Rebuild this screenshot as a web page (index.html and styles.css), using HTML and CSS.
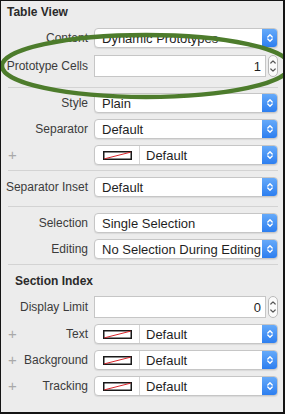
FILE: index.html
```html
<!DOCTYPE html>
<html lang="en">
<head>
  <meta charset="UTF-8">
  <meta name="viewport" content="width=device-width, initial-scale=1.0">
  <link rel="stylesheet" href="styles.css">
</head>
<body>
  <div class="inspector">

    <h3 class="section-title">Table View</h3>

    <div class="row first">
      <span class="label">Content</span>
      <div class="popup">
        <span class="value">Dynamic Prototypes</span>
        <span class="arrows"><svg width="8" height="12" viewBox="0 0 8 12"><path d="M1.8 5 L4 2.8 L6.2 5 M1.8 7 L4 9.2 L6.2 7" /></svg></span>
      </div>
    </div>

    <div class="row field-row">
      <span class="label">Prototype Cells</span>
      <div class="number-field">
        <input class="number" type="text" value="1">
        <span class="stepper"><svg width="8" height="18" viewBox="0 0 8 18"><path d="M1.8 6 L4 3.8 L6.2 6 M1.8 12 L4 14.2 L6.2 12" /></svg></span>
      </div>
    </div>

    <hr class="divider d1">

    <div class="row">
      <span class="label">Style</span>
      <div class="popup">
        <span class="value">Plain</span>
        <span class="arrows"><svg width="8" height="12" viewBox="0 0 8 12"><path d="M1.8 5 L4 2.8 L6.2 5 M1.8 7 L4 9.2 L6.2 7" /></svg></span>
      </div>
    </div>

    <div class="row">
      <span class="label">Separator</span>
      <div class="popup">
        <span class="value">Default</span>
        <span class="arrows"><svg width="8" height="12" viewBox="0 0 8 12"><path d="M1.8 5 L4 2.8 L6.2 5 M1.8 7 L4 9.2 L6.2 7" /></svg></span>
      </div>
    </div>

    <div class="row">
      <span class="label"><span class="plus">+</span></span>
      <div class="popup">
        <span class="swatch"><svg width="29" height="9" viewBox="0 0 29 9"><rect x="0.75" y="0.75" width="27.5" height="7.5" fill="#fff" stroke="#1a1a1a" stroke-width="1.5" /><line x1="1.5" y1="7.8" x2="27.5" y2="1.2" stroke="#d9262c" stroke-width="1" /></svg></span>
        <span class="value">Default</span>
        <span class="arrows"><svg width="8" height="12" viewBox="0 0 8 12"><path d="M1.8 5 L4 2.8 L6.2 5 M1.8 7 L4 9.2 L6.2 7" /></svg></span>
      </div>
    </div>

    <hr class="divider d2">

    <div class="row">
      <span class="label">Separator Inset</span>
      <div class="popup">
        <span class="value">Default</span>
        <span class="arrows"><svg width="8" height="12" viewBox="0 0 8 12"><path d="M1.8 5 L4 2.8 L6.2 5 M1.8 7 L4 9.2 L6.2 7" /></svg></span>
      </div>
    </div>

    <hr class="divider d3">

    <div class="row">
      <span class="label">Selection</span>
      <div class="popup">
        <span class="value">Single Selection</span>
        <span class="arrows"><svg width="8" height="12" viewBox="0 0 8 12"><path d="M1.8 5 L4 2.8 L6.2 5 M1.8 7 L4 9.2 L6.2 7" /></svg></span>
      </div>
    </div>

    <div class="row">
      <span class="label">Editing</span>
      <div class="popup">
        <span class="value">No Selection During Editing</span>
        <span class="arrows"><svg width="8" height="12" viewBox="0 0 8 12"><path d="M1.8 5 L4 2.8 L6.2 5 M1.8 7 L4 9.2 L6.2 7" /></svg></span>
      </div>
    </div>

    <hr class="divider d4">

    <h3 class="section-title sub">Section Index</h3>

    <div class="row field-row">
      <span class="label">Display Limit</span>
      <div class="number-field">
        <input class="number" type="text" value="0">
        <span class="stepper"><svg width="8" height="18" viewBox="0 0 8 18"><path d="M1.8 6 L4 3.8 L6.2 6 M1.8 12 L4 14.2 L6.2 12" /></svg></span>
      </div>
    </div>

    <div class="row">
      <span class="label"><span class="plus">+</span>Text</span>
      <div class="popup">
        <span class="swatch"><svg width="29" height="9" viewBox="0 0 29 9"><rect x="0.75" y="0.75" width="27.5" height="7.5" fill="#fff" stroke="#1a1a1a" stroke-width="1.5" /><line x1="1.5" y1="7.8" x2="27.5" y2="1.2" stroke="#d9262c" stroke-width="1" /></svg></span>
        <span class="value">Default</span>
        <span class="arrows"><svg width="8" height="12" viewBox="0 0 8 12"><path d="M1.8 5 L4 2.8 L6.2 5 M1.8 7 L4 9.2 L6.2 7" /></svg></span>
      </div>
    </div>

    <div class="row">
      <span class="label"><span class="plus">+</span>Background</span>
      <div class="popup">
        <span class="swatch"><svg width="29" height="9" viewBox="0 0 29 9"><rect x="0.75" y="0.75" width="27.5" height="7.5" fill="#fff" stroke="#1a1a1a" stroke-width="1.5" /><line x1="1.5" y1="7.8" x2="27.5" y2="1.2" stroke="#d9262c" stroke-width="1" /></svg></span>
        <span class="value">Default</span>
        <span class="arrows"><svg width="8" height="12" viewBox="0 0 8 12"><path d="M1.8 5 L4 2.8 L6.2 5 M1.8 7 L4 9.2 L6.2 7" /></svg></span>
      </div>
    </div>

    <div class="row">
      <span class="label"><span class="plus">+</span>Tracking</span>
      <div class="popup">
        <span class="swatch"><svg width="29" height="9" viewBox="0 0 29 9"><rect x="0.75" y="0.75" width="27.5" height="7.5" fill="#fff" stroke="#1a1a1a" stroke-width="1.5" /><line x1="1.5" y1="7.8" x2="27.5" y2="1.2" stroke="#d9262c" stroke-width="1" /></svg></span>
        <span class="value">Default</span>
        <span class="arrows"><svg width="8" height="12" viewBox="0 0 8 12"><path d="M1.8 5 L4 2.8 L6.2 5 M1.8 7 L4 9.2 L6.2 7" /></svg></span>
      </div>
    </div>

  </div>

  <!-- hand-drawn highlight over the Prototype Cells row -->
  <svg class="highlight" width="285" height="414" viewBox="0 0 285 414">
    <ellipse cx="146" cy="66" rx="144" ry="31" fill="none" stroke="#4d7c2c" stroke-width="4.5" />
  </svg>
</body>
</html>
```

FILE: styles.css
```css
:root {
  --panel-bg: #ececec;
  --label-color: #3b3b3b;
  --value-color: #1f1f1f;
  --border-color: #c6c6c6;
  --divider-color: #d3d3d3;
  --accent-top: #68acfa;
  --accent-bottom: #2a7cef;
}

html, body {
  margin: 0;
  padding: 0;
  overflow: hidden;
}

body {
  position: relative;
  width: 285px;
  height: 414px;
  box-sizing: border-box;
  background-color: var(--panel-bg);
  border-style: solid;
  border-color: #141414;
  border-width: 1px 2px 2px 1px;
  font-family: 'Liberation Sans', Arial, sans-serif;
}

.inspector {
  display: flex;
  flex-direction: column;
  gap: 6px;
  padding: 3px 5px 0 6px;
}

.section-title {
  margin: 0;
  font-size: 12px;
  line-height: 16px;
  font-weight: bold;
  color: #2a2a2a;
}

.section-title.sub {
  padding-left: 8px;
  margin-top: 2px;
}

.row {
  display: grid;
  grid-template-columns: 81px minmax(0, 1fr);
  column-gap: 6px;
  align-items: center;
  height: 20px;
}

.row.first {
  margin-top: 2px;
}

.row.field-row {
  height: 22px;
  margin-top: 1px;
}

.label {
  display: flex;
  justify-content: flex-end;
  align-items: center;
  position: relative;
  font-size: 12px;
  color: var(--label-color);
  white-space: nowrap;
}

.plus {
  margin-right: auto;
  padding-left: 1px;
  font-size: 15px;
  line-height: 12px;
  color: #a9a9a9;
}

.popup {
  display: flex;
  align-items: center;
  height: 20px;
  box-sizing: border-box;
  background-color: #fff;
  border: 1px solid var(--border-color);
  border-radius: 4px;
  box-shadow: 0 1px 1px rgba(0, 0, 0, 0.08);
  overflow: hidden;
}

.value {
  flex: 1;
  padding-left: 7px;
  font-size: 13px;
  color: var(--value-color);
  white-space: nowrap;
  overflow: hidden;
}

.swatch {
  display: flex;
  align-items: center;
  justify-content: center;
  width: 44px;
  height: 100%;
  border-right: 1px solid #d6d6d6;
}

.swatch + .value {
  padding-left: 6px;
}

.arrows {
  display: flex;
  align-items: center;
  justify-content: center;
  width: 16px;
  height: 20px;
  margin: -1px -1px -1px 0;
  border-radius: 0 4px 4px 0;
  background: linear-gradient(var(--accent-top), var(--accent-bottom));
}

.arrows path {
  fill: none;
  stroke: #fff;
  stroke-width: 1.4;
  stroke-linecap: round;
  stroke-linejoin: round;
}

.number-field {
  display: flex;
  align-items: stretch;
  gap: 2px;
  height: 22px;
}

.number {
  flex: 1 1 0;
  width: 0;
  min-width: 0;
  margin: 0;
  padding: 0 4px 0 0;
  box-sizing: border-box;
  border: 1px solid var(--border-color);
  background-color: #fff;
  font-family: inherit;
  font-size: 13px;
  color: var(--value-color);
  text-align: right;
  outline: none;
}

.stepper {
  display: flex;
  align-items: center;
  justify-content: center;
  flex: 0 0 10px;
  box-sizing: border-box;
  border: 1px solid #b9b9b9;
  border-radius: 5px;
  background-color: #fbfbfb;
}

.stepper path {
  fill: none;
  stroke: #555;
  stroke-width: 1.2;
  stroke-linecap: round;
  stroke-linejoin: round;
}

.divider {
  margin: 0 0 0 1px;
  border: none;
  border-top: 1px solid var(--divider-color);
}

.divider.d1 { margin-top: 4px; margin-bottom: -1px; }
.divider.d2 { margin-top: -1px; margin-bottom: 0; }
.divider.d3 { margin-top: 3px; margin-bottom: 0; }
.divider.d4 { margin-top: -1px; margin-bottom: 0; }

.highlight {
  position: absolute;
  top: -1px;
  left: -1px;
  pointer-events: none;
}
```
